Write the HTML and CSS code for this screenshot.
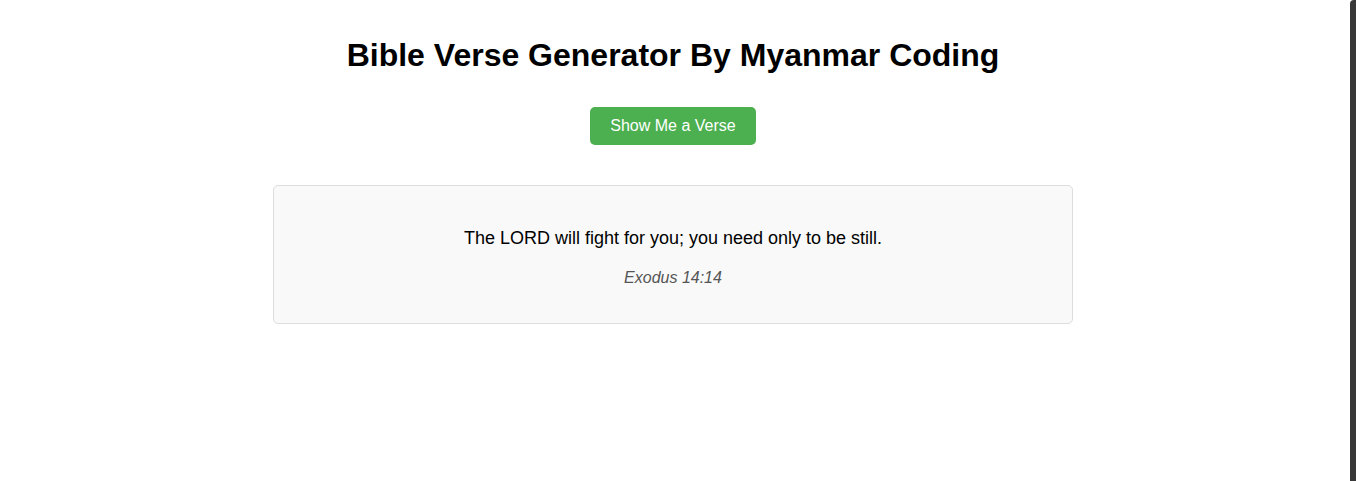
FILE: index.html
```html
<!DOCTYPE html>
<html lang="en">
<head>
<meta charset="utf-8">
<title>Bible Verse Generator</title>
<link rel="stylesheet" href="styles.css">
</head>
<body>
<div class="frame">
  <main class="page">
    <h1 class="title">Bible Verse Generator By Myanmar Coding</h1>
    <button class="btn" type="button">Show Me a Verse</button>
    <section class="card">
      <p class="verse">The LORD will fight for you; you need only to be still.</p>
      <p class="ref">Exodus 14:14</p>
    </section>
  </main>
  <div class="edge"></div>
</div>
</body>
</html>
```

FILE: styles.css
```css
html, body {
  margin: 0;
  padding: 0;
  background: #fff;
  height: 100%;
}
body {
  font-family: "Liberation Sans", Arial, sans-serif;
  color: #000;
}
.frame {
  display: grid;
  grid-template-columns: 1fr 6px;
  height: 481px;
}
.page {
  display: flex;
  flex-direction: column;
  align-items: center;
  padding: 37px 4px 0 0;
}
.title {
  margin: 0;
  font-size: 32px;
  font-weight: bold;
  line-height: 37px;
}
.btn {
  margin-top: 33px;
  background: #4CAF50;
  color: #fff;
  border: none;
  border-radius: 5px;
  padding: 10px 20px;
  font-family: "Liberation Sans", Arial, sans-serif;
  font-size: 16px;
  line-height: 18px;
  cursor: pointer;
}
.card {
  box-sizing: border-box;
  width: 800px;
  margin-top: 40px;
  background: #f9f9f9;
  border: 1px solid #ddd;
  border-radius: 5px;
  padding: 42px 20px 36px;
  text-align: center;
}
.verse {
  margin: 0;
  font-size: 18px;
  line-height: 21px;
}
.ref {
  margin: 20px 0 0;
  font-size: 16px;
  font-style: italic;
  color: #555;
  line-height: 18px;
}
.edge {
  background: #383838;
  border-top-left-radius: 4px;
}
```
